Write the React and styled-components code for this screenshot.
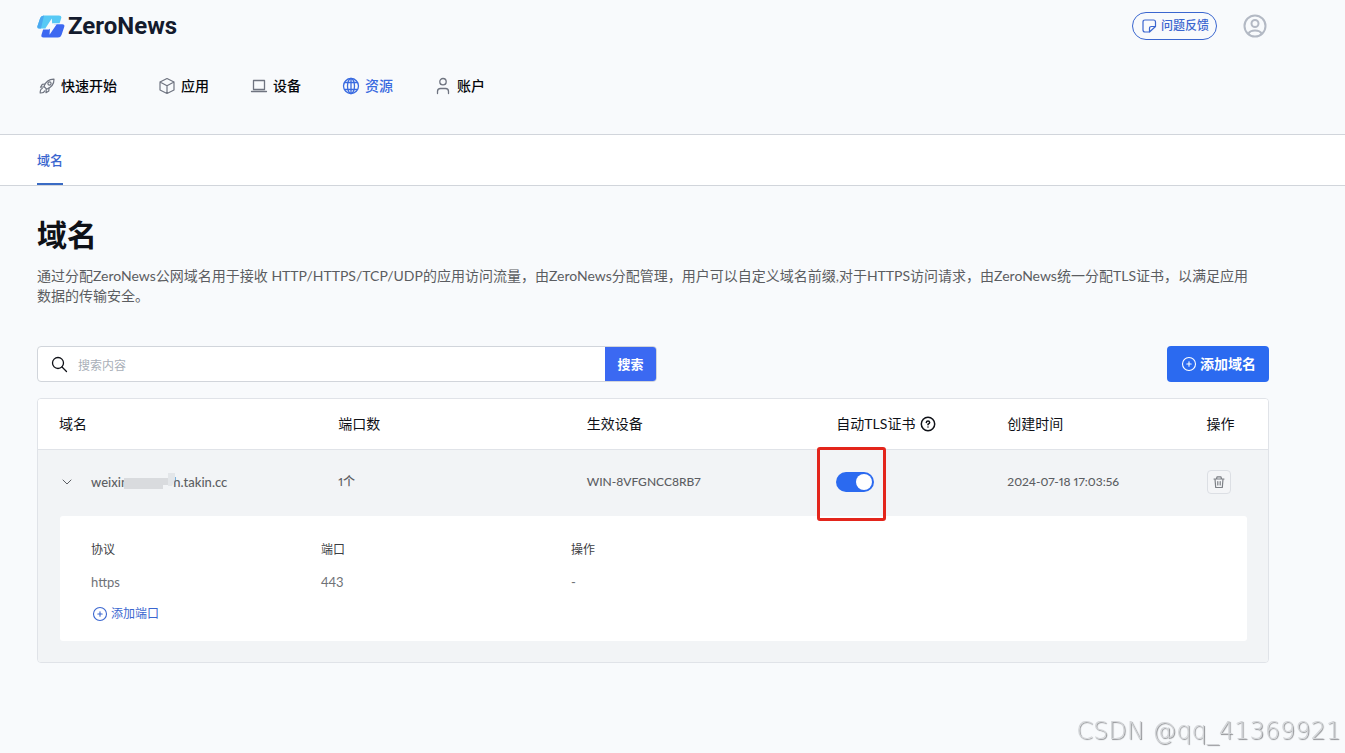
import React, { useState } from 'react';
import styled, { createGlobalStyle } from 'styled-components';

//? Global styling
const GlobalStyle = createGlobalStyle`
  * {
    box-sizing: border-box;
  }
  body {
    margin: 0;
    background: #f8fafc;
    color: #0f1117;
    font-family: Lato, "Noto Sans CJK SC", sans-serif;
    font-size: 14px;
    line-height: 20px;
  }
  button, input {
    font: inherit;
  }
`;

//? Header
const Header = styled.header`
  padding: 12px 78px 0 37px;
  border-bottom: 1px solid #d1d5db;
`;

const TopBar = styled.div`
  display: flex;
  align-items: center;
  height: 28px;
`;

const Logo = styled.a`
  display: flex;
  align-items: center;
  gap: 3px;
  margin-right: auto;
  color: #141b2d;
  font-family: Roboto, sans-serif;
  font-size: 24px;
  font-weight: 700;
  line-height: 28px;
  text-decoration: none;
`;

const FeedbackButton = styled.button`
  display: flex;
  align-items: center;
  gap: 4px;
  height: 28px;
  padding: 0 7px 0 8px;
  border: 1px solid #3a66cf;
  border-radius: 14px;
  background: transparent;
  color: #3a66cf;
  font-size: 12px;
  font-weight: 500;
`;

const AvatarButton = styled.button`
  display: flex;
  margin-left: 26px;
  padding: 0;
  border: 0;
  background: none;
  color: #b3b9c4;
`;

const Nav = styled.nav`
  display: flex;
  gap: 41px;
  padding: 36px 1px 38px;
`;

const NavItem = styled.a`
  display: flex;
  align-items: center;
  gap: 5px;
  color: ${(props) => (props.$active ? '#3a6be0' : '#05070b')};
  font-weight: 500;
  text-decoration: none;

  svg {
    color: ${(props) => (props.$active ? '#3a6be0' : '#6f7480')};
  }
`;

const Tabs = styled.nav`
  display: flex;
  padding: 0 37px;
  border-bottom: 1px solid #d1d5db;
  background: #fff;
`;

const Tab = styled.a`
  padding: 15px 0 13px;
  border-bottom: 2px solid #3a6bc4;
  color: #3a66cf;
  font-size: 13px;
  font-weight: 500;
  text-decoration: none;
`;

//? Page content
const Main = styled.main`
  padding: 28px 76px 90px 37px;
`;

const Title = styled.h1`
  margin: 0;
  font-size: 30px;
  font-weight: 700;
  line-height: 40px;
`;

const Description = styled.p`
  margin: 12px 0 40px;
  padding-right: 12px;
  color: #5b5d61;
`;

const Toolbar = styled.div`
  display: flex;
  align-items: center;
  justify-content: space-between;
  margin-bottom: 16px;
`;

const SearchForm = styled.form`
  display: flex;
  align-items: center;
  width: 620px;
  height: 36px;
  border: 1px solid #d1d5db;
  border-radius: 4px;
  background: #fff;

  svg {
    margin: 0 10px 0 13px;
  }
`;

const SearchInput = styled.input`
  flex: 1;
  min-width: 0;
  height: 34px;
  padding: 2px 0 0;
  border: 0;
  outline: 0;
  background: none;
  font-size: 12px;

  &::placeholder {
    color: #a9afb8;
  }
`;

const SearchButton = styled.button`
  width: 51px;
  height: 34px;
  padding: 0;
  border: 0;
  border-radius: 0 3px 3px 0;
  background: #3b69f2;
  color: #fff;
  font-size: 13px;
  font-weight: 700;
`;

const AddButton = styled.button`
  display: flex;
  align-items: center;
  gap: 3px;
  height: 36px;
  padding: 0 13px 0 14px;
  border: 0;
  border-radius: 4px;
  background: #2b6af0;
  color: #fff;
  font-weight: 700;
`;

//? Domain table
const TableCard = styled.div`
  border: 1px solid #e0e3e8;
  border-radius: 4px;
  overflow: hidden;
`;

const Table = styled.table`
  width: 100%;
  border-spacing: 0;
  table-layout: fixed;
`;

const Column = styled.col`
  width: ${(props) => props.$width};
`;

const HeadCell = styled.th`
  height: 51px;
  padding: 0 0 0 21px;
  border-bottom: 1px solid #e0e3e8;
  background: #fff;
  font-weight: 400;
  text-align: left;
`;

const HeadLabel = styled.span`
  display: flex;
  align-items: center;
  gap: 5px;
`;

const Cell = styled.td`
  height: 66px;
  padding: 0 0 2px 21px;
  background: #f2f4f6;
  color: #5c5e63;
  font-size: 12px;
  font-weight: 500;
  font-variant-numeric: proportional-nums;
`;

const Domain = styled.div`
  display: flex;
  align-items: center;
  font-size: 13px;
`;

const ExpandButton = styled.button`
  display: flex;
  margin-right: 16px;
  padding: 0;
  border: 0;
  background: none;
  color: #5c5e63;
`;

const Redaction = styled.svg`
  flex: none;
  z-index: 1;
  margin: 0 -5px 0 -4px;
`;

const SwitchLabel = styled.label`
  position: relative;
  display: flex;
  width: 38px;
  height: 20px;
`;

const SwitchInput = styled.input`
  appearance: none;
  display: flex;
  justify-content: ${(props) => (props.checked ? 'flex-end' : 'flex-start')};
  width: 100%;
  height: 100%;
  margin: 0;
  padding: 2px;
  border-radius: 10px;
  background: ${(props) => (props.checked ? '#2b6af0' : '#c3c8d0')};

  &::before {
    content: '';
    width: 16px;
    height: 16px;
    border-radius: 50%;
    background: #fff;
  }
`;

const Highlight = styled.span`
  position: absolute;
  inset: -25px -12px -29px -19px;
  border: 3px solid #e3251b;
  border-radius: 3px;
  pointer-events: none;
`;

const DeleteButton = styled.button`
  display: flex;
  align-items: center;
  justify-content: center;
  width: 24px;
  height: 24px;
  padding: 0;
  border: 1px solid #dcdfe4;
  border-radius: 4px;
  background: #f4f5f7;
  color: #7d8086;
`;

const DetailCell = styled.td`
  padding: 0 21px 21px 22px;
  background: #f2f4f6;
`;

const DetailPanel = styled.div`
  padding: 18px 31px 11px;
  border-radius: 3px;
  background: #fff;
`;

const PortTable = styled.table`
  border-collapse: collapse;
  font-size: 12px;

  th, td {
    height: 32px;
    padding: 0;
    font-weight: 400;
    text-align: left;
  }
  th {
    color: #3c3e43;
  }
  td {
    color: #6f7277;
    font-size: 13px;
  }
`;

const AddPortButton = styled.button`
  display: flex;
  align-items: center;
  gap: 3px;
  height: 32px;
  padding: 0 0 0 1px;
  border: 0;
  background: none;
  color: #3a66cf;
  font-size: 12px;
`;

const Watermark = styled.div`
  position: fixed;
  right: 4px;
  bottom: 2px;
  color: #d3d5d8;
  font-family: "DejaVu Sans", sans-serif;
  font-size: 24px;
  font-weight: 200;
  line-height: 40px;
  text-shadow: 1px 1px 1px #8b8d90;
  pointer-events: none;
`;

//? Icons
const Icon = ({ size = 16, box = 16, stroke = 1, children }) => (
  <svg
    width={size}
    height={size}
    viewBox={`0 0 ${box} ${box}`}
    fill="none"
    stroke="currentColor"
    strokeWidth={stroke}
    strokeLinecap="round"
    strokeLinejoin="round"
    aria-hidden="true"
  >
    {children}
  </svg>
);

const LogoMark = () => (
  <svg width="28" height="23" viewBox="0 0 28 23" aria-hidden="true">
    <path d="M7 0.500H22Q25 0.500 24.200 3.200L22.600 8.300H15.500L8.500 13.500H2.500Q-0.300 13.500 0.500 10.900L3.200 3Q4.200 0.500 7 0.500Z" fill="#57c9f5" />
    <path d="M0.500 11L3.200 3Q4 0.500 7 0.500L4 13.500H2.500Q-0.300 13.500 0.500 11Z" fill="#4aa8f0" />
    <path d="M17.500 9.300H25.300Q28 9.300 27.300 11.800L24.500 20Q23.600 22.500 21 22.500H6.500Q3.700 22.500 4.500 19.800L6.100 14.500H12Z" fill="#3d68f1" />
    <path d="M14.800 3.500L8.300 13.600H13L12.500 19.800L19.700 9.200H15.200Z" fill="#f8fafc" />
  </svg>
);

const RocketIcon = () => (
  <Icon size={18} box={18} stroke={1.2}>
    <path d="M6 9.500C7.400 5.500 10.600 2.100 16 2.200C16.100 7.200 12.800 10.500 8.600 12.200Z" />
    <circle cx="11.500" cy="6.500" r="1.600" />
    <path d="M7 7L4.300 7.400L2.500 10.200L5.800 10M11 11.200L10.800 13.900L8 15.700L8.200 12.400" />
    <path d="M4.300 11.500C2.600 12 2.100 13.700 2.200 16C4.500 16.100 6.200 15.500 6.700 13.900" />
  </Icon>
);

const CubeIcon = () => (
  <Icon size={18} box={18} stroke={1.2}>
    <path d="M9 1.500L16 5V13L9 16.500L2 13V5ZM2 5L9 8.700L16 5M9 8.700V16.500" />
  </Icon>
);

const LaptopIcon = () => (
  <Icon size={18} box={18} stroke={1.3}>
    <path d="M3.500 3.500H14.500V12.500H3.500ZM1.500 14.500H16.500" />
  </Icon>
);

const GlobeIcon = () => (
  <Icon size={18} box={18} stroke={1.3}>
    <circle cx="9" cy="9" r="7.500" />
    <ellipse cx="9" cy="9" rx="3.500" ry="7.500" />
    <path d="M2.500 5.500H15.500M2.500 12.500H15.500M9 1.500V16.500" />
  </Icon>
);

const UserIcon = () => (
  <Icon size={18} box={18} stroke={1.3}>
    <circle cx="9" cy="4.700" r="3.200" />
    <path d="M3.500 16.500V14.500Q3.500 11.500 6.500 11.500H11.500Q14.500 11.500 14.500 14.500V16.500" />
  </Icon>
);

const NoteIcon = () => (
  <Icon stroke={1.2}>
    <path d="M8.500 14H4Q2 14 2 12V4Q2 2 4 2H12.500Q14.500 2 14.500 4V8.500L8.500 14V10.500Q8.500 8.500 10.500 8.500H14.500" />
  </Icon>
);

const AvatarIcon = () => (
  <Icon size={24} box={24} stroke={2}>
    <circle cx="12" cy="12" r="10.500" />
    <circle cx="12" cy="9.500" r="3.500" />
    <path d="M5.500 19.500Q7 16.500 12 16.500T18.500 19.500" />
  </Icon>
);

const SearchIcon = () => (
  <Icon size={17} box={17} stroke={1.3}>
    <circle cx="7" cy="7" r="5.500" />
    <path d="M11 11L15.500 15.500" />
  </Icon>
);

const PlusCircleIcon = () => (
  <Icon stroke={1.1}>
    <circle cx="8" cy="8" r="6.500" />
    <path d="M5.800 8H10.200M8 5.800V10.200" />
  </Icon>
);

const HelpIcon = () => (
  <Icon stroke={1.5}>
    <circle cx="8" cy="8" r="6.700" />
    <path d="M6.300 6.500Q6.500 5 8 5T9.700 6.500Q9.700 7.500 8 8.200V8.800M8 10.900V11" />
  </Icon>
);

const ChevronIcon = () => (
  <Icon>
    <path d="M4 6L8 10L12 6" />
  </Icon>
);

const TrashIcon = () => (
  <Icon size={14} box={14} stroke={1.2}>
    <path d="M2 4H12M3 4L3.700 12.500H10.300L11 4M4.500 4L5 1.800H9L9.500 4M5.800 6.500V10M8.200 6.500V10" />
  </Icon>
);

const navItems = [
  { label: '快速开始', icon: RocketIcon },
  { label: '应用', icon: CubeIcon },
  { label: '设备', icon: LaptopIcon },
  { label: '资源', icon: GlobeIcon, active: true },
  { label: '账户', icon: UserIcon },
];

const columnWidths = ['22.7%', '20.2%', '20.3%', '13.9%', '16.2%', 'auto'];

const ports = [{ protocol: 'https', port: '443' }];

function DomainRow() {
  const [open, setOpen] = useState(true);
  const [tls, setTls] = useState(true);

  return (
    <>
      <tr>
        <Cell>
          <Domain>
            <ExpandButton aria-label="展开" aria-expanded={open} onClick={() => setOpen(!open)}>
              <ChevronIcon />
            </ExpandButton>
            <span>weixin</span>
            <Redaction width="54" height="20" viewBox="0 0 54 20" aria-hidden="true">
              <path d="M0 6H44V13H39V17H0Z" fill="#d9dbde" />
              <path d="M44 1H51V8L48 14H44Z" fill="#e3e6e9" />
            </Redaction>
            <span>h.takin.cc</span>
          </Domain>
        </Cell>
        <Cell>1个</Cell>
        <Cell>WIN-8VFGNCC8RB7</Cell>
        <Cell>
          <SwitchLabel>
            <SwitchInput
              type="checkbox"
              role="switch"
              aria-label="自动TLS证书"
              checked={tls}
              onChange={(e) => setTls(e.target.checked)}
            />
            <Highlight />
          </SwitchLabel>
        </Cell>
        <Cell>2024-07-18 17:03:56</Cell>
        <Cell>
          <DeleteButton aria-label="删除">
            <TrashIcon />
          </DeleteButton>
        </Cell>
      </tr>
      {open && (
        <tr>
          <DetailCell colSpan={6}>
            <DetailPanel>
              <PortTable>
                <colgroup>
                  <Column $width="230px" />
                  <Column $width="250px" />
                  <Column $width="250px" />
                </colgroup>
                <thead>
                  <tr>
                    <th>协议</th>
                    <th>端口</th>
                    <th>操作</th>
                  </tr>
                </thead>
                <tbody>
                  {ports.map((item) => (
                    <tr key={item.port}>
                      <td>{item.protocol}</td>
                      <td>{item.port}</td>
                      <td>-</td>
                    </tr>
                  ))}
                </tbody>
              </PortTable>
              <AddPortButton>
                <PlusCircleIcon />
                添加端口
              </AddPortButton>
            </DetailPanel>
          </DetailCell>
        </tr>
      )}
    </>
  );
}

function App() {
  return (
    <>
      <GlobalStyle />
      <Header>
        <TopBar>
          <Logo href="#">
            <LogoMark />
            ZeroNews
          </Logo>
          <FeedbackButton>
            <NoteIcon />
            问题反馈
          </FeedbackButton>
          <AvatarButton aria-label="账户">
            <AvatarIcon />
          </AvatarButton>
        </TopBar>
        <Nav>
          {navItems.map(({ label, icon: NavIcon, active }) => (
            <NavItem key={label} href="#" $active={active}>
              <NavIcon />
              {label}
            </NavItem>
          ))}
        </Nav>
      </Header>
      <Tabs>
        <Tab href="#">域名</Tab>
      </Tabs>
      <Main>
        <Title>域名</Title>
        <Description>
          通过分配ZeroNews公网域名用于接收 HTTP/HTTPS/TCP/UDP的应用访问流量，由ZeroNews分配管理，用户可以自定义域名前缀,对于HTTPS访问请求，由ZeroNews统一分配TLS证书，以满足应用数据的传输安全。
        </Description>
        <Toolbar>
          <SearchForm onSubmit={(e) => e.preventDefault()}>
            <SearchIcon />
            <SearchInput placeholder="搜索内容" aria-label="搜索内容" />
            <SearchButton>搜索</SearchButton>
          </SearchForm>
          <AddButton>
            <PlusCircleIcon />
            添加域名
          </AddButton>
        </Toolbar>
        <TableCard>
          <Table>
            <colgroup>
              {columnWidths.map((width, i) => (
                <Column key={i} $width={width} />
              ))}
            </colgroup>
            <thead>
              <tr>
                <HeadCell>域名</HeadCell>
                <HeadCell>端口数</HeadCell>
                <HeadCell>生效设备</HeadCell>
                <HeadCell>
                  <HeadLabel>
                    自动TLS证书
                    <HelpIcon />
                  </HeadLabel>
                </HeadCell>
                <HeadCell>创建时间</HeadCell>
                <HeadCell>操作</HeadCell>
              </tr>
            </thead>
            <tbody>
              <DomainRow />
            </tbody>
          </Table>
        </TableCard>
      </Main>
      <Watermark>CSDN @qq_41369921</Watermark>
    </>
  );
}

export default App;
